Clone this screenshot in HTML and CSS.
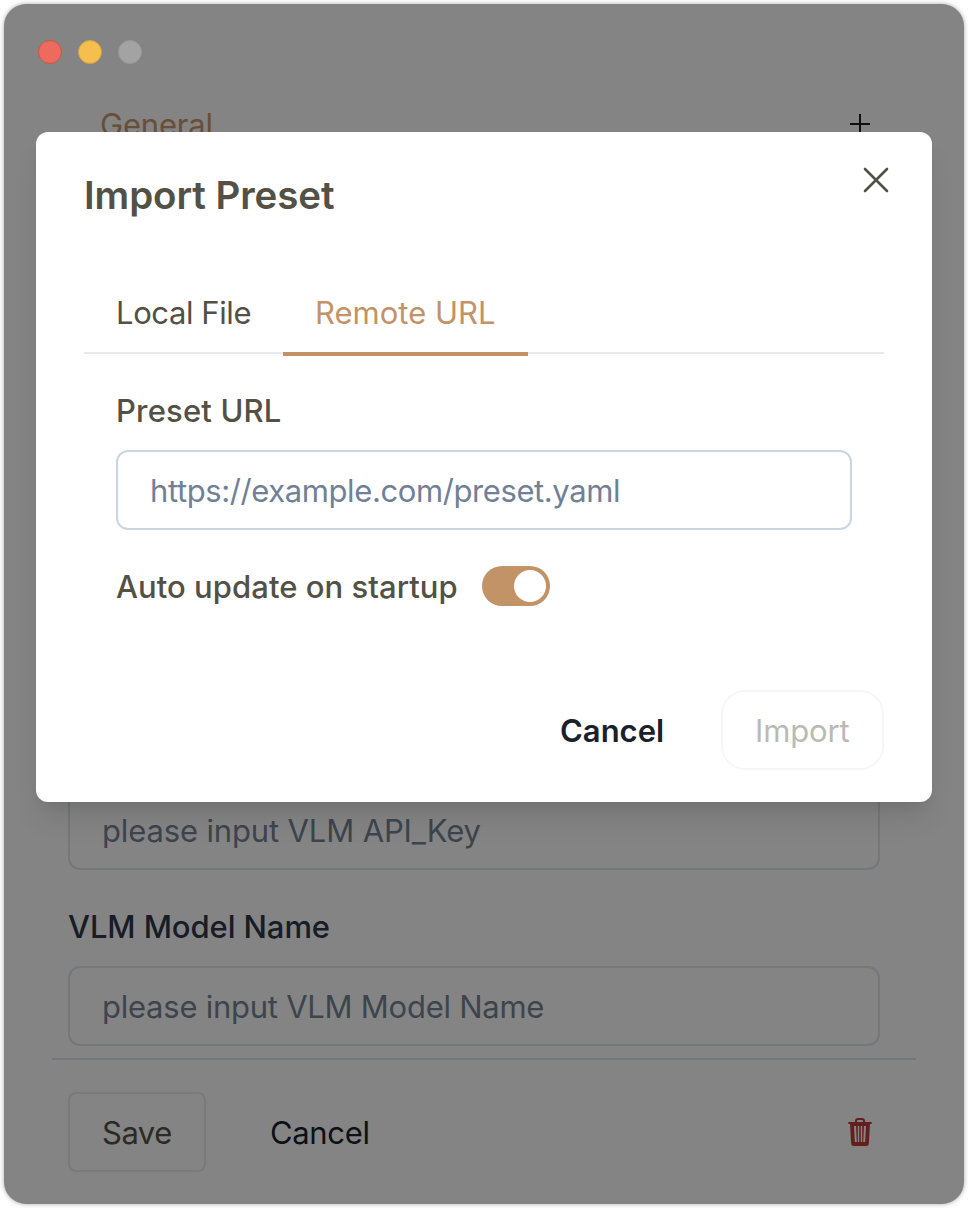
FILE: index.html
```html
<!DOCTYPE html>
<html lang="en">
<head>
<meta charset="utf-8">
<title>Settings</title>
<link rel="stylesheet" href="styles.css">
</head>
<body>
<main class="window">
  <header class="titlebar">
    <span class="light light-close"></span>
    <span class="light light-min"></span>
    <span class="light light-max"></span>
  </header>
  <section class="tabs-row">
    <span class="t general">General</span>
    <svg class="plus" viewBox="0 0 20 20" width="20" height="20"><path d="M10 0v20M0 10h20" fill="none" stroke="#0d1016" stroke-width="2"/></svg>
  </section>
  <section class="form">
    <div class="field"><span class="t ph ph-key">please input VLM API_Key</span></div>
    <label class="t form-label">VLM Model Name</label>
    <div class="field"><span class="t ph">please input VLM Model Name</span></div>
  </section>
  <footer class="footer">
    <button class="save"><span class="t save-text">Save</span></button>
    <span class="t footer-cancel">Cancel</span>
    <svg class="trash" viewBox="0 0 24 28" width="24" height="28">
      <path d="M8 4.500V3q0-2 2-2h4q2 0 2 2v1.500" fill="none" stroke="#641f1c" stroke-width="2"/>
      <path fill="#641f1c" fill-rule="evenodd" d="M.3 4h23.400v2H22L20.800 26q-.2 2-2.300 2h-13q-2.100 0-2.300-2L2 6H.3zM6 8l.8 16h2L8 8zM9.800 8v16h1.400V8zM12.800 8v16h1.400V8zM16 8l-.8 16h2L18 8z"/>
    </svg>
  </footer>

  <div class="dialog" role="dialog">
    <div class="dialog-head">
      <h1 class="t title">Import Preset</h1>
      <svg class="close" viewBox="0 0 26 26" width="26" height="26"><path d="M2 2l22 22M24 2L2 24" fill="none" stroke="#535045" stroke-width="2.600" stroke-linecap="round"/></svg>
    </div>
    <nav class="tabs">
      <span class="tab tab-local"><span class="t local">Local File</span></span>
      <span class="tab tab-remote"><span class="t remote">Remote URL</span></span>
    </nav>
    <div class="panel">
      <label class="t url-label">Preset URL</label>
      <div class="url-field"><span class="t url">https://example.com/preset.yaml</span></div>
      <div class="auto-row">
        <span class="t auto">Auto update on startup</span>
        <span class="switch"><span class="knob"></span></span>
      </div>
    </div>
    <div class="actions">
      <span class="t cancel">Cancel</span>
      <button class="import"><span class="t import-text">Import</span></button>
    </div>
  </div>
</main>
</body>
</html>
```
FILE: styles.css
```css
* { box-sizing: border-box; }
body {
  margin: 0;
  padding: 4px;
  background: #fff;
  font-family: Inter, "Liberation Sans", sans-serif;
  font-size: 31px;
  line-height: 40px;
}
.t { display: block; white-space: nowrap; }
.window {
  position: relative;
  width: 960px;
  height: 1200px;
  border-radius: 22px;
  background: #848484;
  box-shadow: 0 0 5px rgba(0, 0, 0, .33);
  display: flex;
  flex-direction: column;
}
.titlebar { display: flex; gap: 16px; padding: 36px 34px 0; height: 60px; }
.light { width: 24px; height: 24px; border-radius: 50%; }
.light-close { background: #ed6a5e; border: 1px solid #cf5347; }
.light-min { background: #f5bf4f; border: 1px solid #d6a243; }
.light-max { background: #a3a3a3; border: 1px solid #979797; }
.tabs-row { display: flex; justify-content: space-between; padding: 41px 94px 0 96px; height: 640px; }
.general { color: #694e37; letter-spacing: -.2px; }
.plus { margin-top: 9px; }
.form { padding: 86px 84px 0 64px; height: 354px; }
.field {
  height: 80px;
  border: 2px solid #74777b;
  border-radius: 12px;
  padding: 19px 32px 0;
  color: #3d444e;
}
.ph { letter-spacing: -.25px; }
.ph-key { letter-spacing: -.14px; }
.form-label { color: #171c26; font-weight: 500; letter-spacing: -.1px; margin: 37px 0 19px; }
.footer {
  display: flex;
  margin: 0 48px;
  padding: 32px 44px 0 16px;
  border-top: 2px solid #74787d;
}
.save {
  width: 138px;
  height: 80px;
  padding: 2px 0 0 32px;
  border: 2px solid #7a7a7a;
  border-radius: 8px;
  background: none;
  color: #2b2a24;
  font: inherit;
  letter-spacing: -.5px;
  text-align: left;
}
.footer-cancel { color: #0d1016; margin: 21px auto 0 64px; letter-spacing: -.35px; }
.trash { margin-top: 26px; }
.dialog {
  position: absolute;
  left: 32px;
  top: 128px;
  width: 896px;
  height: 670px;
  padding: 32px 48px;
  border-radius: 12px;
  background: #fff;
  color: #535045;
  box-shadow: 0 20px 30px -6px rgba(0, 0, 0, .1), 0 8px 12px -4px rgba(0, 0, 0, .06);
}
.dialog-head { display: flex; justify-content: space-between; height: 108px; }
.title { margin: 6px 0 0; font-size: 38.5px; font-weight: 600; line-height: 50px; letter-spacing: -.08px; }
.close { margin: 3px -5px 0 0; }
.tabs { display: flex; height: 82px; border-bottom: 2px solid #e9e9e9; }
.tab { height: 84px; padding: 21px 32px 0; }
.tab-local { width: 199px; letter-spacing: -.4px; }
.tab-remote { width: 245px; color: #c19367; border-bottom: 4px solid #c19367; }
.panel { padding: 37px 32px 0; }
.url-label, .auto { font-weight: 500; }
.url-label { letter-spacing: .18px; }
.url-field {
  height: 80px;
  margin-top: 19px;
  padding: 19px 32px 0;
  border: 2px solid #cbd5e0;
  border-radius: 12px;
  color: #718096;
}
.url { letter-spacing: -.4px; }
.auto-row { display: flex; margin-top: 36px; height: 42px; }
.auto { width: 366px; padding-top: 1px; letter-spacing: .05px; }
.switch { width: 68px; height: 40px; padding: 4px; border-radius: 20px; background: #c19367; display: flex; justify-content: flex-end; }
.knob { width: 32px; height: 32px; border-radius: 50%; background: #fff; }
.actions { display: flex; justify-content: flex-end; margin-top: 82px; }
.cancel { width: 161px; margin-top: 21px; color: #1a202c; font-weight: 600; }
.import {
  width: 163px;
  height: 80px;
  padding: 2px 0 0 32px;
  border: 2px solid #f6f6f6;
  border-radius: 24px;
  background: none;
  color: #babab5;
  font: inherit;
  letter-spacing: -.15px;
  text-align: left;
}
```
